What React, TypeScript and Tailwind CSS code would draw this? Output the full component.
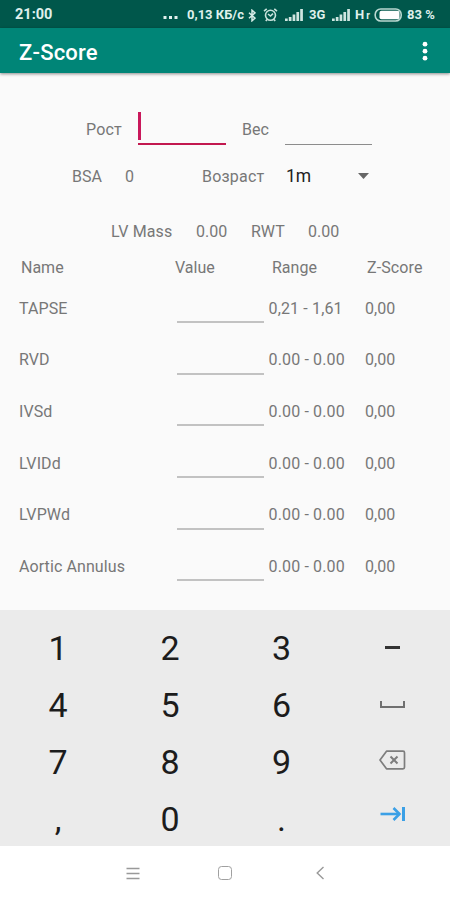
import type { ReactNode } from "react";

interface Measurement {
  name: string;
  range: string;
  score: string;
}

const measurements: Measurement[] = [
  { name: "TAPSE", range: "0,21 - 1,61", score: "0,00" },
  { name: "RVD", range: "0.00 - 0.00", score: "0,00" },
  { name: "IVSd", range: "0.00 - 0.00", score: "0,00" },
  { name: "LVIDd", range: "0.00 - 0.00", score: "0,00" },
  { name: "LVPWd", range: "0.00 - 0.00", score: "0,00" },
  { name: "Aortic Annulus", range: "0.00 - 0.00", score: "0,00" },
];

function Bluetooth() {
  return (
    <svg className="w-2 h-[13px] shrink-0" viewBox="0 0 8 13" fill="none" stroke="#d5ebe6" strokeWidth="1.5">
      <path d="M1 3.7l6 5.4-3 2.7V1.2l3 2.7-6 5.4" />
    </svg>
  );
}

function Alarm() {
  return (
    <svg className="w-[15px] h-[14px] shrink-0" viewBox="0 0 15 14" fill="none" stroke="#c9e2dc" strokeWidth="1.6">
      <circle cx="7.5" cy="7.3" r="5" />
      <path d="M1 3.2l2.7-2.3M14 3.2L11.3.9M5 6l2.5 2L10 5.6M4 11.5L2.8 13M11 11.5l1.2 1.5" />
    </svg>
  );
}

function Signal() {
  return (
    <svg className="w-[18px] h-3 shrink-0" viewBox="0 0 18 12" fill="#cfe6e1">
      <path d="M0 9.5h2.7V12H0zM3.8 8h2.7v4H3.800zM7.6 5.5h2.7V12H7.6zM11.4 3h2.7v9h-2.7zM15.2 0h2.7v12h-2.7z" />
    </svg>
  );
}

function Battery() {
  return (
    <svg className="w-[29px] h-[14px] shrink-0" viewBox="0 0 29 14">
      <rect x="1.2" y="1" width="26" height="12" rx="5.5" fill="none" stroke="#b9d8d1" strokeWidth="1.6" />
      <rect x="5.5" y="2.8" width="20" height="8.4" rx="2" fill="#fff" />
    </svg>
  );
}

function StatusBar() {
  return (
    <div className="h-7 bg-[#00574b] flex items-center pl-[15px] pt-[2px] text-[13px] font-bold text-[#dff0ec] whitespace-nowrap">
      <span className="text-[14.5px] w-[148px]">21:00</span>
      <svg className="w-[15px] h-3 shrink-0" viewBox="0 0 15 12" fill="#e2f1ee">
        <path d="M.5 7h3v3h-3zM6 7h3v3H6zM11.500 7h3v3h-3z" />
      </svg>
      <span className="ml-[9px] w-[61px] text-[13px]">0,13 КБ/с</span>
      <Bluetooth />
      <span className="w-[7px]" />
      <Alarm />
      <span className="w-[7px]" />
      <Signal />
      <span className="ml-[6px] w-[23px]">3G</span>
      <Signal />
      <span className="ml-[5px] w-[19px]">
        H<span className="text-[10px] ml-[2px]">r</span>
      </span>
      <Battery />
      <span className="ml-[4px]">83 %</span>
    </div>
  );
}

function AppBar() {
  return (
    <div className="h-[45px] bg-[#008577] shadow-[0_1px_3px_rgba(0,0,0,0.45)] flex items-center justify-between pl-[19px] pr-[22px]">
      <h1 className="text-[22px] font-medium text-white pt-[3px] tracking-[0.2px]">Z-Score</h1>
      <svg className="w-[6px] h-5" viewBox="0 0 6 20" fill="#fff">
        <circle cx="3" cy="3.2" r="2.4" />
        <circle cx="3" cy="10.2" r="2.4" />
        <circle cx="3" cy="17.2" r="2.4" />
      </svg>
    </div>
  );
}

function PatientForm() {
  return (
    <div>
      <div className="flex h-[35px] mt-[39px] pl-[86px]">
        <span className="w-[52px] pt-[6px] tracking-[0.2px]">Рост</span>
        <div className="w-[88px] h-[33px] border-b-2 border-[#c2184f]">
          <div className="w-[3px] h-[28px] bg-[#c9185b]" />
        </div>
        <span className="w-[43px] ml-[16px] pt-[6px]">Вес</span>
        <div className="w-[87px] h-[33px] border-b-[1.5px] border-[#8c8c8c]" />
      </div>
      <div className="flex items-center h-6 mt-[18px] pl-[72px]">
        <span className="w-[53px]">BSA</span>
        <span className="w-[77px]">0</span>
        <span className="w-[84px] tracking-[0.2px]">Возраст</span>
        <span className="w-[72px] text-[17.5px] text-[#222] pb-[1px]">1m</span>
        <svg className="w-[11px] h-[6px] mb-[2px]" viewBox="0 0 11 6" fill="#666">
          <path d="M0 0h11L5.5 6z" />
        </svg>
      </div>
      <div className="flex items-center h-6 mt-[31px] pl-[111px]">
        <span className="w-[85px] tracking-[0.1px]">LV Mass</span>
        <span className="w-[55px]">0.00</span>
        <span className="w-[57px]">RWT</span>
        <span>0.00</span>
      </div>
    </div>
  );
}

function MeasurementTable() {
  return (
    <div>
      <div className="flex items-center h-6 mt-[12px] pl-[21px]">
        <span className="w-[154px]">Name</span>
        <span className="w-[97px]">Value</span>
        <span className="w-[95px]">Range</span>
        <span className="tracking-[0.1px]">Z-Score</span>
      </div>
      <div className="mt-[3px]">
        {measurements.map((m) => (
          <div key={m.name} className="flex items-center h-[51.6px] pl-[19px]">
            <span className="w-[158px] tracking-[0.1px]">{m.name}</span>
            <div className="w-[87px] h-[29px] border-b-2 border-[#c2c2c2]" />
            <span className="w-[101px] pl-[4.5px] tracking-[0.15px]">{m.range}</span>
            <span>{m.score}</span>
          </div>
        ))}
      </div>
    </div>
  );
}

function Key({ children }: { children: ReactNode }) {
  return <button className="h-[57px] flex items-center justify-center">{children}</button>;
}

function Keyboard() {
  return (
    <div className="h-[236px] bg-[#ebebeb] pt-[9px] pl-[2px] grid grid-cols-[112px_112px_111px_111px] content-start text-[34px] leading-none text-[#1c1c1c] overflow-hidden shrink-0">
      <Key>1</Key>
      <Key>2</Key>
      <Key>3</Key>
      <Key>
        <span className="w-[15px] h-[3px] bg-[#333]" />
      </Key>
      <Key>4</Key>
      <Key>5</Key>
      <Key>6</Key>
      <Key>
        <span className="w-[25px] h-[7px] border-2 border-t-0 border-[#707070]" />
      </Key>
      <Key>7</Key>
      <Key>8</Key>
      <Key>9</Key>
      <Key>
        <svg className="w-[27px] h-5 -mt-1" viewBox="0 0 27 20" fill="none" stroke="#7d7d7d" strokeWidth="1.7">
          <path d="M7.5 1.2H24q1.5 0 1.500 1.500v14.600q0 1.500-1.500 1.500H7.500L1 10z" strokeLinejoin="round" />
          <path d="M11.500 6.500l7 7M18.500 6.500l-7 7" strokeWidth="2" />
        </svg>
      </Key>
      <Key>,</Key>
      <Key>0</Key>
      <Key>.</Key>
      <Key>
        <svg className="w-[26px] h-4 -mt-[10px]" viewBox="0 0 26 16" fill="none" stroke="#3ba0e6">
          <path d="M.5 8h19" strokeWidth="2.6" />
          <path d="M13.5 2l6 6-6 6" strokeWidth="2.6" />
          <path d="M23.5 1v14" strokeWidth="3" />
        </svg>
      </Key>
    </div>
  );
}

function NavBar() {
  return (
    <div className="flex-1 bg-white flex items-center pl-[126px]">
      <svg className="w-[14px] h-[13px]" viewBox="0 0 14 13" stroke="#999" strokeWidth="1.4">
        <path d="M.5 1.500h13M.5 6.500h13M.5 11.500h13" />
      </svg>
      <span className="w-[14px] h-[14px] ml-[78px] rounded-[3.5px] border-[1.5px] border-[#a0a0a0]" />
      <svg className="w-2 h-[14px] ml-[84px]" viewBox="0 0 8 14" fill="none" stroke="#999" strokeWidth="1.4">
        <path d="M7.5 1L1.200 7l6.300 6" />
      </svg>
    </div>
  );
}

export default function App() {
  return (
    <div className="w-[450px] h-[900px] bg-[#fafafa] flex flex-col overflow-hidden font-['Roboto',sans-serif]">
      <StatusBar />
      <AppBar />
      <main className="h-[537px] text-base text-[#777] whitespace-nowrap shrink-0">
        <PatientForm />
        <MeasurementTable />
      </main>
      <Keyboard />
      <NavBar />
    </div>
  );
}
